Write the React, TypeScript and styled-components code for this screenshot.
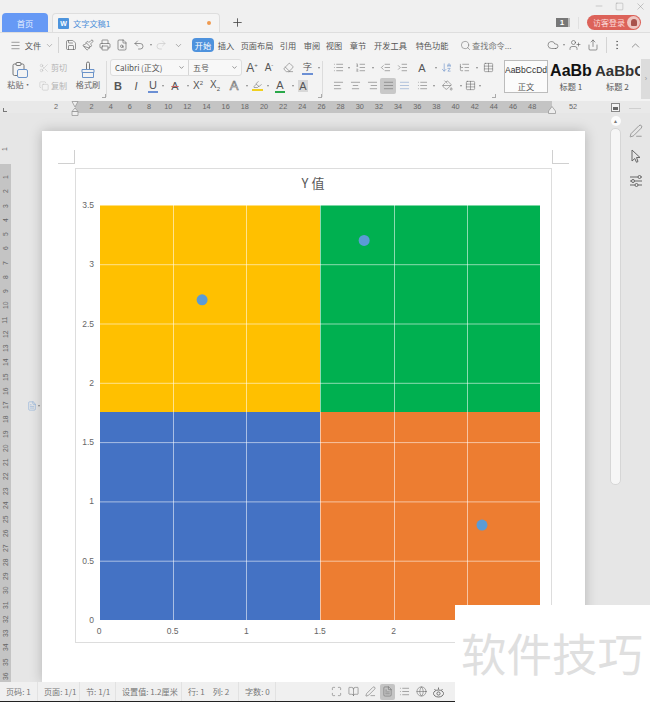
import React from 'react';
import styled, { createGlobalStyle } from 'styled-components';
import {
  AlignCenter,
  AlignJustify,
  AlignLeft,
  AlignRight,
  ArrowDownAZ,
  BookOpen,
  ChevronDown,
  ChevronUp,
  Cloud,
  Copy,
  Eraser,
  FileSearch,
  FileText,
  Globe,
  IndentDecrease,
  IndentIncrease,
  List,
  ListOrdered,
  ListTree,
  Maximize,
  Menu,
  MoreVertical,
  Paintbrush,
  PaintBucket,
  PenLine,
  Highlighter,
  Printer,
  Redo2,
  Save,
  Scissors,
  Search,
  Share,
  Square,
  Table,
  Undo2,
  UserPlus,
  Minus,
  Plus,
  X,
} from 'lucide-react';

const cjk = `"Noto Sans CJK SC", "Liberation Sans", sans-serif`;

const GlobalStyle = createGlobalStyle`
  html, body {
    margin: 0;
    padding: 0;
    background: #f1f1f1;
  }
  body {
    font-family: "Liberation Sans", "Noto Sans CJK SC", sans-serif;
    color: #555;
  }
`;

const Shell = styled.div`
  position: relative;
  width: 650px;
  height: 702px;
  overflow: hidden;
  display: flex;
  flex-direction: column;
`;

/* ---------- title bar ---------- */

const TitleBar = styled.div`
  height: 33px;
  flex: none;
  display: flex;
  align-items: flex-end;
  background: #f0f0f0;
  border-bottom: 1px solid #dedede;
  box-sizing: border-box;
  padding-left: 2px;
`;

const HomeTab = styled.div`
  width: 46px;
  height: 19px;
  background: #6699f5;
  border-radius: 4px 4px 0 0;
  color: #e8f0ff;
  font: 8.3px ${cjk};
  display: flex;
  align-items: center;
  justify-content: center;
`;

const DocTab = styled.div`
  width: 168px;
  height: 19px;
  margin-left: 4px;
  background: #f4f4f4;
  border: 1px solid #dedede;
  border-bottom: none;
  border-radius: 4px 4px 0 0;
  box-sizing: border-box;
  display: flex;
  align-items: center;
  padding: 0 5px;
  gap: 4px;
  color: #4e8fd9;
  font: 8.2px ${cjk};
`;

const WordBadge = styled.span`
  width: 11px;
  height: 11px;
  border-radius: 1px;
  background: #4d94dd;
  color: #fff;
  font: bold 7px "Liberation Sans", sans-serif;
  display: flex;
  align-items: center;
  justify-content: center;
`;

const UnsavedDot = styled.span`
  width: 4px;
  height: 4px;
  border-radius: 50%;
  background: #ef9a50;
  margin-left: auto;
  margin-right: 3px;
`;

const AddTab = styled.div`
  width: 34px;
  height: 20px;
  display: flex;
  align-items: center;
  justify-content: center;
  color: #444;
`;

const TitleRight = styled.div`
  margin-left: auto;
  height: 32px;
  width: 100px;
  display: flex;
  flex-direction: column;
  align-items: flex-end;
`;

const WindowControls = styled.div`
  display: flex;
  height: 12px;
  gap: 11px;
  margin-right: 4px;
  color: #8e8e8e;
  align-items: center;
`;

const AccountRow = styled.div`
  display: flex;
  align-items: center;
  margin-top: 3px;
  margin-right: 9px;
`;

const CountBadge = styled.span`
  width: 12px;
  height: 9px;
  background: #777;
  color: #fff;
  font: bold 8px/9px "Liberation Sans", sans-serif;
  text-align: center;
  border-right: 2px solid #bbb;
`;

const AccountSep = styled.span`
  width: 1px;
  height: 12px;
  background: #e0e0e0;
  margin: 0 8px;
`;

const LoginPill = styled.div`
  width: 54px;
  height: 15px;
  border-radius: 8px;
  background: #dc6259;
  color: #fbdcd9;
  font: 8px ${cjk};
  display: flex;
  align-items: center;
  padding-left: 6px;
  box-sizing: border-box;
  position: relative;
`;

const Avatar = styled.span`
  position: absolute;
  right: 1px;
  top: 1px;
  width: 13px;
  height: 13px;
  border-radius: 50%;
  background: #eec7c3;
  display: flex;
  align-items: center;
  justify-content: center;
  &::after {
    content: '';
    width: 6px;
    height: 7px;
    border-radius: 3px 3px 1px 1px;
    background: #a9524c;
  }
`;

/* ---------- menu row ---------- */

const MenuRow = styled.div`
  height: 24px;
  flex: none;
  display: flex;
  align-items: center;
  background: #f3f3f3;
  color: #555;
  font: 8.2px ${cjk};
`;

const MenuSlot = styled.span<{ $w: number; $ml?: number }>`
  width: ${({ $w }) => $w}px;
  margin-left: ${({ $ml }) => $ml ?? 0}px;
  flex: none;
  display: flex;
  align-items: center;
  justify-content: center;
  white-space: nowrap;
`;

const ActiveMenu = styled(MenuSlot)`
  height: 14px;
  border-radius: 4px;
  background: #4e92dd;
  color: #fff;
`;

const VSep = styled.span<{ $h?: number; $ml?: number }>`
  width: 1px;
  height: ${({ $h }) => $h ?? 16}px;
  margin-left: ${({ $ml }) => $ml ?? 0}px;
  background: #d4d4d4;
  flex: none;
`;

const SearchHint = styled.span`
  display: flex;
  align-items: center;
  gap: 1px;
  color: #777;
  width: 56px;
  margin-left: 12px;
  flex: none;
  white-space: nowrap;
`;

const Caret = styled.span<{ $w?: number }>`
  width: ${({ $w }) => $w ?? 5}px;
  height: 16px;
  flex: none;
  display: flex;
  align-items: center;
  justify-content: center;
  &::after {
    content: '';
    border-left: 1.5px solid transparent;
    border-right: 1.5px solid transparent;
    border-top: 2px solid #888;
  }
`;

/* ---------- ribbon ---------- */

const Ribbon = styled.div`
  height: 44px;
  flex: none;
  display: flex;
  background: #f3f3f3;
  color: #666;
  font: 8.1px ${cjk};
`;

const ToolGroup = styled.div<{ $w: number }>`
  width: ${({ $w }) => $w}px;
  flex: none;
  display: flex;
  flex-direction: column;
  box-sizing: border-box;
  padding-top: 2px;
  gap: 1px;
`;

const BigTool = styled.div<{ $w: number }>`
  width: ${({ $w }) => $w}px;
  flex: none;
  display: flex;
  flex-direction: column;
  align-items: center;
  padding-top: 4px;
  white-space: nowrap;
  line-height: 12px;
  color: #666;
`;

const SmallTool = styled.div<{ $dim?: boolean }>`
  height: 17px;
  display: flex;
  align-items: center;
  gap: 2px;
  color: ${({ $dim }) => ($dim ? '#b4b4b4' : '#666')};
  white-space: nowrap;
`;

const ToolRow = styled.div<{ $pl: number }>`
  height: 17px;
  display: flex;
  align-items: center;
  padding-left: ${({ $pl }) => $pl}px;
`;

const RibbonSep = styled.div`
  width: 1px;
  height: 36px;
  margin-top: 4px;
  background: #dcdcdc;
  flex: none;
`;

const Field = styled.div<{ $w: number }>`
  width: ${({ $w }) => $w}px;
  height: 100%;
  display: flex;
  align-items: center;
  justify-content: space-between;
  box-sizing: border-box;
  padding: 0 3px 0 4px;
  font: 8px ${cjk};
  color: #555;
  & + & {
    border-left: 1px solid #d6d6d6;
  }
`;

const FontBox = styled.div`
  display: flex;
  height: 15px;
  border: 1px solid #dedede;
  background: #f8f8f8;
  border-radius: 3px;
  margin-right: 2px;
`;

const Cell = styled.span<{ $w: number; $on?: boolean }>`
  width: ${({ $w }) => $w}px;
  height: 16px;
  flex: none;
  display: flex;
  align-items: center;
  justify-content: center;
  border-radius: 2px;
  background: ${({ $on }) => ($on ? '#c8c8c8' : 'transparent')};
  color: #666;
`;

const Glyph = styled.span<{
  $size?: number;
  $bold?: boolean;
  $italic?: boolean;
  $under?: string;
  $strike?: boolean;
  $fill?: boolean;
  $outline?: boolean;
}>`
  position: relative;
  font: ${({ $bold, $italic, $size }) =>
    `${$italic ? 'italic ' : ''}${$bold ? 'bold ' : ''}${$size ?? 11}px "Liberation Sans", sans-serif`};
  line-height: 12px;
  color: ${({ $outline }) => ($outline ? 'transparent' : '#555')};
  -webkit-text-stroke: ${({ $outline }) => ($outline ? '0.6px #666' : '0')};
  padding: 0 1px;
  background: ${({ $fill }) => ($fill ? '#d8d8d8' : 'transparent')};
  border-bottom: ${({ $under }) => ($under ? `2px solid ${$under}` : 'none')};
  text-decoration: ${({ $strike }) => ($strike ? 'line-through #c66' : 'none')};
  display: flex;
  align-items: flex-start;
`;

const Sup = styled.sup`
  font-size: 6px;
  line-height: 6px;
  margin: 0;
  vertical-align: baseline;
`;

const Sub = styled.sub`
  font-size: 6px;
  line-height: 6px;
  margin: 7px 0 0;
  vertical-align: baseline;
`;

const StyleGallery = styled.div`
  display: flex;
  width: 137px;
  margin-left: 8px;
  margin-top: 2px;
  height: 40px;
  overflow: hidden;
  flex: none;
`;

const StyleCard = styled.div<{ $w: number; $on?: boolean }>`
  width: ${({ $w }) => $w}px;
  flex: none;
  box-sizing: border-box;
  height: 33px;
  margin-top: 1px;
  border: ${({ $on }) => ($on ? '1px solid #bcbcbc' : '1px solid transparent')};
  background: ${({ $on }) => ($on ? '#fbfbfb' : 'transparent')};
  display: flex;
  flex-direction: column;
  align-items: center;
  overflow: hidden;
  font: 8.2px/12px ${cjk};
  color: #555;
`;

const StylePreview = styled.div<{ $size: number; $bold?: boolean; $dark?: boolean; $clip?: boolean }>`
  height: 19px;
  font: ${({ $bold, $size }) => `${$bold ? 'bold ' : ''}${$size}px/19px "Liberation Sans", sans-serif`};
  color: ${({ $dark }) => ($dark ? '#111' : '#333')};
  white-space: nowrap;
  align-self: ${({ $clip }) => ($clip ? 'flex-start' : 'center')};
`;

const GalleryArrow = styled.div`
  width: 10px;
  margin-top: 2px;
  height: 40px;
  background: #dcdcdc;
  color: #999;
  font: 7px/40px "Liberation Sans", sans-serif;
  text-align: center;
  flex: none;
`;

const Corner = styled.span`
  width: 3px;
  height: 3px;
  margin-left: -3px;
  border-right: 1px solid #aaa;
  border-bottom: 1px solid #aaa;
  align-self: flex-end;
  margin-bottom: 3px;
  flex: none;
`;

/* ---------- rulers ---------- */

const TopRuler = styled.div`
  position: relative;
  height: 12px;
  flex: none;
  display: flex;
  background: #e9e9e9;
  font: 7.3px/12px "Liberation Sans", sans-serif;
  color: #666;
`;

const RulerBand = styled.div`
  width: 477px;
  margin-left: 3px;
  background: #c4c4c4;
  display: flex;
  flex: none;
  padding-left: 7px;
  box-sizing: border-box;
`;

const RulerCell = styled.span`
  width: 19.17px;
  flex: none;
  text-align: center;
`;

const RulerMargin = styled.span<{ $w: number }>`
  width: ${({ $w }) => $w}px;
  flex: none;
  text-align: right;
`;

/* markers riding on the ruler */
const RulerMarker = styled.svg<{ $x: number; $y?: number }>`
  position: absolute;
  left: ${({ $x }) => $x}px;
  top: ${({ $y }) => $y ?? 0}px;
  z-index: 2;
`;

const TabStop = styled.span`
  position: absolute;
  left: 3px;
  top: 7px;
  width: 3px;
  height: 3px;
  border-left: 1px solid #777;
  border-bottom: 1px solid #777;
`;

const Workspace = styled.div`
  flex: 1;
  min-height: 0;
  display: flex;
  background: #e6e6e6;
`;

const SideRuler = styled.div`
  width: 11px;
  flex: none;
  display: flex;
  flex-direction: column;
  font: 6.8px/14.26px "Liberation Sans", sans-serif;
  color: #666;
`;

const SideTop = styled.div`
  height: 51px;
  flex: none;
  box-sizing: border-box;
  padding-top: 29px;
  text-align: center;
`;

const SideBand = styled.div`
  flex: 1;
  background: #c4c4c4;
  padding-top: 6px;
  overflow: hidden;
`;

const SideCell = styled.div`
  height: 14.26px;
  display: flex;
  align-items: center;
  justify-content: center;
`;

const Turned = styled.span`
  display: block;
  transform: rotate(-90deg);
`;

const DocArea = styled.div`
  width: 31px;
  flex: none;
  display: flex;
  align-items: center;
  justify-content: center;
  color: #7ba4d8;
  padding-top: 16px;
  padding-left: 15px;
  box-sizing: border-box;
`;

const Page = styled.div`
  width: 543px;
  margin-top: 18px;
  flex: none;
  background: #fff;
  box-shadow: 0 0 12px rgba(0, 0, 0, 0.22);
  box-sizing: border-box;
  padding: 19px 33px 0 16px;
`;

const HeaderMarks = styled.div`
  height: 18px;
  display: flex;
  justify-content: space-between;
`;

const MarkLeft = styled.div`
  width: 16px;
  height: 13px;
  border-right: 1px solid #d0d0d0;
  border-bottom: 1px solid #d0d0d0;
`;

const MarkRight = styled.div`
  width: 16px;
  height: 13px;
  margin-right: -17px;
  border-left: 1px solid #d0d0d0;
  border-bottom: 1px solid #d0d0d0;
`;

const ChartFrame = styled.div`
  width: 477px;
  height: 475px;
  margin-left: 17px;
  border: 1px solid #dddddd;
  box-sizing: border-box;
`;

const ScrollColumn = styled.div`
  width: 11px;
  flex: none;
  margin-left: 25px;
  display: flex;
  flex-direction: column;
  align-items: center;
  padding-top: 3px;
`;

const ScrollUp = styled.div`
  width: 10px;
  height: 10px;
  border-radius: 50%;
  background: #fbfbfb;
  color: #777;
  font: 5px/10px "Liberation Sans", sans-serif;
  text-align: center;
`;

const ScrollThumb = styled.div`
  width: 9px;
  height: 355px;
  margin-top: 2px;
  border: 1px solid #d6d6d6;
  border-radius: 5px;
  background: #f6f6f6;
`;

const SidePanel = styled.div`
  flex: 1;
  display: flex;
  flex-direction: column;
  align-items: center;
  gap: 11px;
  padding-top: 11px;
  color: #666;
`;

/* ---------- status bar ---------- */

const StatusBar = styled.div`
  height: 20px;
  flex: none;
  display: flex;
  align-items: center;
  background: #f0f0f0;
  border-bottom: 1px solid #222;
  box-sizing: border-box;
  font: 8.1px ${cjk};
  color: #777;
`;

const StatusItem = styled.span<{ $w: number }>`
  width: ${({ $w }) => $w}px;
  flex: none;
  height: 100%;
  box-sizing: border-box;
  padding-left: 6px;
  display: flex;
  align-items: center;
  gap: 8px;
  border-right: 1px solid #e2e2e2;
  white-space: nowrap;
`;

const StatusIcons = styled.div`
  margin-left: auto;
  margin-right: 204px;
  display: flex;
  align-items: center;
  gap: 2px;
  color: #666;
`;

const ViewButton = styled.span<{ $on?: boolean }>`
  width: 15px;
  height: 16px;
  display: flex;
  align-items: center;
  justify-content: center;
  border-radius: 2px;
  background: ${({ $on }) => ($on ? '#c4c4c4' : 'transparent')};
`;

/* sits over the corner of the screenshot, as the stamp does */
const Watermark = styled.div`
  position: absolute;
  right: 0;
  bottom: 0;
  width: 195px;
  height: 97px;
  background: #fff;
  color: #dfdfdf;
  font: 45.5px/45px ${cjk};
  box-sizing: border-box;
  padding: 25px 0 0 6px;
  white-space: nowrap;
`;

/* ---------- hand drawn icons, the packages have no match ---------- */

function PasteIcon() {
  return (
    <svg width="18" height="18" viewBox="0 0 18 18" fill="none" stroke="#777" strokeWidth="1">
      <path d="M5.5 3H3.5a1.5 1.5 0 0 0-1.500 1.500V13a1.500 1.500 0 0 0 1.500 1.500H6" />
      <path d="M9.500 3h2a1.500 1.500 0 0 1 1.500 1.500V8" />
      <rect x="5" y="1.500" width="5" height="3" rx="1" />
      <rect x="6.500" y="8.500" width="10" height="8" rx="1.500" stroke="#6b93c9" />
    </svg>
  );
}

function BrushIcon() {
  return (
    <svg width="18" height="18" viewBox="0 0 18 18" fill="none" stroke="#777" strokeWidth="1">
      <path d="M7.500 8V2.500a1.500 1.500 0 0 1 3 0V8" />
      <path d="M3 8.500h12v3H3z" stroke="#6b93c9" />
      <path d="M3.500 11.500V16.500h11v-5" stroke="#6b93c9" />
    </svg>
  );
}

function PointerIcon() {
  return (
    <svg width="14" height="14" viewBox="0 0 14 14" fill="none" stroke="#666" strokeWidth="1">
      <path d="M3 1l8 7.500H7.500L9 12.500l-1.500.8L5.800 9.500 3 12z" />
    </svg>
  );
}

function SlidersIcon() {
  return (
    <svg width="14" height="14" viewBox="0 0 14 14" fill="none" stroke="#666" strokeWidth="1">
      <path d="M1 3h8M12 3h1M1 7h1.500M5.500 7H13M1 11h5M9 11h4" />
      <circle cx="10.500" cy="3" r="1.500" />
      <circle cx="4" cy="7" r="1.500" />
      <circle cx="7.500" cy="11" r="1.500" />
    </svg>
  );
}

function EyeCareIcon() {
  return (
    <svg width="13" height="13" viewBox="0 0 13 13" fill="none" stroke="#666" strokeWidth="0.9">
      <ellipse cx="6.500" cy="8.500" rx="5" ry="3.500" />
      <circle cx="6.500" cy="8.500" r="1.600" />
      <path d="M2.500 4L3.500 5.300M6.500 2.500V4.500M10.500 4L9.500 5.300" />
    </svg>
  );
}

/* ---------- chart ---------- */

const xTicks = [0, 0.5, 1, 1.5, 2, 2.5, 3];
const yTicks = [0, 0.5, 1, 1.5, 2, 2.5, 3, 3.5];
const points = [
  { x: 0.7, y: 2.7 },
  { x: 1.8, y: 3.2 },
  { x: 2.6, y: 0.8 },
];

const toX = (v: number) => 24 + v * 147.3;
const toY = (v: number) => 451 - v * 118.6;

function ScatterChart() {
  return (
    <svg width="475" height="473" viewBox="0 0 475 473" style={{ display: 'block' }}>
      <text x="237" y="19" textAnchor="middle" fontSize="13" fill="#595959" fontFamily={cjk}>
        Y 值
      </text>
      <rect x="24" y="36" width="220" height="207" fill="#ffc000" />
      <rect x="244" y="36" width="220" height="207" fill="#00b050" />
      <rect x="24" y="243" width="220" height="208" fill="#4472c4" />
      <rect x="244" y="243" width="220" height="208" fill="#ed7d31" />
      {xTicks.map((t) => (
        <line
          key={t}
          x1={Math.round(toX(t)) - 0.5}
          x2={Math.round(toX(t)) - 0.5}
          y1="36"
          y2="451"
          stroke="#fff"
          strokeOpacity="0.55"
        />
      ))}
      {yTicks.map((t) => (
        <line key={t} x1="24" x2="465" y1={toY(t) + 0.5} y2={toY(t) + 0.5} stroke="#fff" strokeOpacity="0.55" />
      ))}
      {yTicks.map((t) => (
        <text key={t} x="18" y={toY(t) + 3} textAnchor="end" fontSize="8.5" fill="#666" fontFamily="Liberation Sans">
          {t}
        </text>
      ))}
      {[0, 0.5, 1, 1.5, 2].map((t) => (
        <text key={t} x={toX(t) - 1} y="465" textAnchor="middle" fontSize="8.5" fill="#666" fontFamily="Liberation Sans">
          {t}
        </text>
      ))}
      {points.map((p) => (
        <circle key={p.x} cx={toX(p.x) - 1} cy={toY(p.y)} r="5.5" fill="#5b9bd5" />
      ))}
    </svg>
  );
}

const rulerNumbers = Array.from({ length: 24 }, (_, i) => (i + 1) * 2);
const sideNumbers = Array.from({ length: 36 }, (_, i) => i + 1);

const ic = { size: 11, strokeWidth: 1.2 };
const menuIc = { size: 12, strokeWidth: 1.2 };

export default function App() {
  return (
    <Shell>
      <GlobalStyle />
      <TitleBar>
        <HomeTab>首页</HomeTab>
        <DocTab>
          <WordBadge>W</WordBadge>
          文字文稿1
          <UnsavedDot />
        </DocTab>
        <AddTab>
          <Plus size={13} strokeWidth={1.5} />
        </AddTab>
        <TitleRight>
          <WindowControls>
            <Minus size={10} strokeWidth={1} />
            <Square size={9} strokeWidth={1} />
            <X size={11} strokeWidth={1} />
          </WindowControls>
          <AccountRow>
            <CountBadge>1</CountBadge>
            <AccountSep />
            <LoginPill>
              访客登录
              <Avatar />
            </LoginPill>
          </AccountRow>
        </TitleRight>
      </TitleBar>

      <MenuRow>
        <MenuSlot $w={14} $ml={8}>
          <Menu size={11} strokeWidth={1.2} />
        </MenuSlot>
        <MenuSlot $w={22}>文件</MenuSlot>
        <MenuSlot $w={10}>
          <ChevronDown size={9} strokeWidth={1} />
        </MenuSlot>
        <VSep $ml={4} />
        <MenuSlot $w={17} $ml={3}>
          <Save {...menuIc} />
        </MenuSlot>
        <MenuSlot $w={17}>
          <Paintbrush {...menuIc} />
        </MenuSlot>
        <MenuSlot $w={17}>
          <Printer {...menuIc} />
        </MenuSlot>
        <MenuSlot $w={17}>
          <FileSearch {...menuIc} />
        </MenuSlot>
        <MenuSlot $w={18}>
          <Undo2 {...menuIc} />
        </MenuSlot>
        <Caret />
        <MenuSlot $w={16}>
          <Redo2 {...menuIc} color="#c4c4c4" />
        </MenuSlot>
        <MenuSlot $w={16} $ml={1}>
          <ChevronDown size={9} strokeWidth={1.2} />
        </MenuSlot>
        <ActiveMenu $w={22} $ml={6}>
          开始
        </ActiveMenu>
        <MenuSlot $w={22} $ml={1}>
          插入
        </MenuSlot>
        <MenuSlot $w={32} $ml={4}>
          页面布局
        </MenuSlot>
        <MenuSlot $w={22} $ml={4}>
          引用
        </MenuSlot>
        <MenuSlot $w={22} $ml={2}>
          审阅
        </MenuSlot>
        <MenuSlot $w={22}>视图</MenuSlot>
        <MenuSlot $w={22} $ml={2}>
          章节
        </MenuSlot>
        <MenuSlot $w={33} $ml={5}>
          开发工具
        </MenuSlot>
        <MenuSlot $w={32} $ml={9}>
          特色功能
        </MenuSlot>
        <SearchHint>
          <Search size={11} strokeWidth={1.3} />
          查找命令...
        </SearchHint>
        <MenuSlot $w={16} $ml={29}>
          <Cloud {...menuIc} />
        </MenuSlot>
        <Caret />
        <MenuSlot $w={16} $ml={1}>
          <UserPlus {...menuIc} />
        </MenuSlot>
        <MenuSlot $w={16} $ml={2}>
          <Share {...menuIc} />
        </MenuSlot>
        <VSep $ml={5} />
        <MenuSlot $w={14} $ml={3}>
          <MoreVertical {...menuIc} />
        </MenuSlot>
        <MenuSlot $w={14} $ml={4}>
          <ChevronUp size={13} strokeWidth={1.1} />
        </MenuSlot>
      </MenuRow>

      <Ribbon>
        <BigTool $w={39}>
          <PasteIcon />
          粘贴·
        </BigTool>
        <ToolGroup $w={32}>
          <SmallTool $dim>
            <Scissors size={10} strokeWidth={1} />
            剪切
          </SmallTool>
          <SmallTool $dim>
            <Copy size={10} strokeWidth={1} />
            复制
          </SmallTool>
        </ToolGroup>
        <BigTool $w={34}>
          <BrushIcon />
          格式刷
        </BigTool>
        <Corner />
        <RibbonSep />
        <ToolGroup $w={214}>
          <ToolRow $pl={3}>
            <FontBox>
              <Field $w={77}>
                Calibri (正文)
                <ChevronDown size={7} />
              </Field>
              <Field $w={53}>
                五号
                <ChevronDown size={7} />
              </Field>
            </FontBox>
            <Cell $w={16}>
              <Glyph $size={12}>
                A<Sup>+</Sup>
              </Glyph>
            </Cell>
            <Cell $w={18}>
              <Glyph $size={10}>
                A<Sup>-</Sup>
              </Glyph>
            </Cell>
            <Cell $w={20}>
              <Eraser {...ic} />
            </Cell>
            <Cell $w={18}>
              <Glyph $size={9} $under="#6b8fd4">
                字
              </Glyph>
            </Cell>
            <Caret />
          </ToolRow>
          <ToolRow $pl={3}>
            <Cell $w={16}>
              <Glyph $bold $size={11}>
                B
              </Glyph>
            </Cell>
            <Cell $w={20}>
              <Glyph $italic $size={11}>
                I
              </Glyph>
            </Cell>
            <Cell $w={14}>
              <Glyph $size={11} $under="#6b8fd4">
                U
              </Glyph>
            </Cell>
            <Caret />
            <Cell $w={20}>
              <Glyph $size={11} $strike>
                A
              </Glyph>
            </Cell>
            <Caret />
            <Cell $w={16}>
              <Glyph $size={10}>
                X<Sup>2</Sup>
              </Glyph>
            </Cell>
            <Cell $w={18}>
              <Glyph $size={10}>
                X<Sub>2</Sub>
              </Glyph>
            </Cell>
            <Cell $w={20}>
              <Glyph $size={13} $outline>
                A
              </Glyph>
            </Cell>
            <Caret />
            <Cell $w={16}>
              <Glyph $under="#f0d020">
                <Highlighter size={9} strokeWidth={1.3} />
              </Glyph>
            </Cell>
            <Caret />
            <Cell $w={20}>
              <Glyph $size={11} $under="#2aa84a">
                A
              </Glyph>
            </Cell>
            <Caret />
            <Cell $w={16}>
              <Glyph $size={11} $fill>
                A
              </Glyph>
            </Cell>
          </ToolRow>
        </ToolGroup>
        <Corner />
        <RibbonSep />
        <ToolGroup $w={172}>
          <ToolRow $pl={7}>
            <Cell $w={16}>
              <List {...ic} />
            </Cell>
            <Caret $w={6} />
            <Cell $w={16}>
              <ListOrdered {...ic} />
            </Cell>
            <Caret $w={9} />
            <Cell $w={16}>
              <IndentDecrease {...ic} />
            </Cell>
            <Cell $w={18}>
              <IndentIncrease {...ic} />
            </Cell>
            <Cell $w={22}>
              <Glyph $size={11}>A</Glyph>
            </Cell>
            <Caret />
            <Cell $w={16}>
              <ArrowDownAZ size={11} strokeWidth={1.2} color="#5d88c7" />
            </Cell>
            <Cell $w={20}>
              <ListTree {...ic} />
            </Cell>
            <Caret />
            <Cell $w={18}>
              <Table {...ic} />
            </Cell>
          </ToolRow>
          <ToolRow $pl={7}>
            <Cell $w={16}>
              <AlignLeft {...ic} />
            </Cell>
            <Cell $w={18}>
              <AlignCenter {...ic} />
            </Cell>
            <Cell $w={16}>
              <AlignRight {...ic} />
            </Cell>
            <Cell $w={16} $on>
              <AlignJustify {...ic} />
            </Cell>
            <Cell $w={17}>
              <AlignJustify {...ic} color="#7b9bc8" />
            </Cell>
            <Cell $w={18}>
              <List {...ic} />
            </Cell>
            <Caret />
            <Cell $w={22}>
              <PaintBucket {...ic} />
            </Cell>
            <Caret />
            <Cell $w={14}>
              <Table {...ic} />
            </Cell>
            <Caret />
          </ToolRow>
        </ToolGroup>
        <Corner />
        <StyleGallery>
          <StyleCard $w={44} $on>
            <StylePreview $size={8.5}>AaBbCcDd</StylePreview>
            正文
          </StyleCard>
          <StyleCard $w={46}>
            <StylePreview $size={16} $bold $dark>
              AaBb
            </StylePreview>
            标题 1
          </StyleCard>
          <StyleCard $w={47}>
            <StylePreview $size={15} $bold $clip>
              AaBbCc
            </StylePreview>
            标题 2
          </StyleCard>
        </StyleGallery>
        <GalleryArrow>›</GalleryArrow>
      </Ribbon>

      <TopRuler>
        <TabStop />
        <RulerMarker $x={71} width="8" height="15" viewBox="0 0 8 15">
          <path d="M1 .5h6L4 6zM4 7l3 3.500H1zM1 10.500h6V14.500H1z" fill="#eee" stroke="#999" strokeWidth="0.8" />
        </RulerMarker>
        <RulerMarker $x={548} $y={5} width="8" height="8" viewBox="0 0 8 8">
          <path d="M4 .5L7.500 5v2.500H.5V5z" fill="#eee" stroke="#999" strokeWidth="0.8" />
        </RulerMarker>
        <RulerMarker $x={611} $y={2} width="9" height="9" viewBox="0 0 9 9">
          <rect x="0.5" y="0.5" width="8" height="8" fill="#f4f4f4" stroke="#888" />
          <rect x="2" y="4" width="5" height="3" fill="#666" />
        </RulerMarker>
        <RulerMarker $x={629} $y={6} width="12" height="3" viewBox="0 0 12 3">
          <line x1="0" x2="12" y1="1.500" y2="1.500" stroke="#cfcfcf" />
        </RulerMarker>
        <RulerMargin $w={58}>2</RulerMargin>
        <RulerMargin $w={14} />
        <RulerBand>
          {rulerNumbers.map((n) => (
            <RulerCell key={n}>{n}</RulerCell>
          ))}
        </RulerBand>
        <RulerMargin $w={25}>52</RulerMargin>
      </TopRuler>

      <Workspace>
        <SideRuler>
          <SideTop>
            <Turned>1</Turned>
          </SideTop>
          <SideBand>
            {sideNumbers.map((n) => (
              <SideCell key={n}>
                <Turned>{n}</Turned>
              </SideCell>
            ))}
          </SideBand>
        </SideRuler>
        <DocArea>
          <FileText size={10} strokeWidth={1.2} />
          <Caret />
        </DocArea>
        <Page>
          <HeaderMarks>
            <MarkLeft />
            <MarkRight />
          </HeaderMarks>
          <ChartFrame>
            <ScatterChart />
          </ChartFrame>
        </Page>
        <ScrollColumn>
          <ScrollUp>▲</ScrollUp>
          <ScrollThumb />
        </ScrollColumn>
        <SidePanel>
          <PenLine size={14} strokeWidth={1} />
          <PointerIcon />
          <SlidersIcon />
        </SidePanel>
      </Workspace>

      <StatusBar>
        <StatusItem $w={38}>页码: 1</StatusItem>
        <StatusItem $w={42}>页面: 1/1</StatusItem>
        <StatusItem $w={36}>节: 1/1</StatusItem>
        <StatusItem $w={66}>设置值: 1.2厘米</StatusItem>
        <StatusItem $w={57}>
          <span>行: 1</span>
          <span>列: 2</span>
        </StatusItem>
        <StatusItem $w={37}>字数: 0</StatusItem>
        <StatusIcons>
          <ViewButton>
            <Maximize {...ic} />
          </ViewButton>
          <ViewButton>
            <BookOpen {...ic} />
          </ViewButton>
          <ViewButton>
            <PenLine {...ic} />
          </ViewButton>
          <ViewButton $on>
            <FileText {...ic} />
          </ViewButton>
          <ViewButton>
            <List {...ic} />
          </ViewButton>
          <ViewButton>
            <Globe {...ic} />
          </ViewButton>
          <ViewButton>
            <EyeCareIcon />
          </ViewButton>
        </StatusIcons>
      </StatusBar>

      <Watermark>软件技巧</Watermark>
    </Shell>
  );
}
